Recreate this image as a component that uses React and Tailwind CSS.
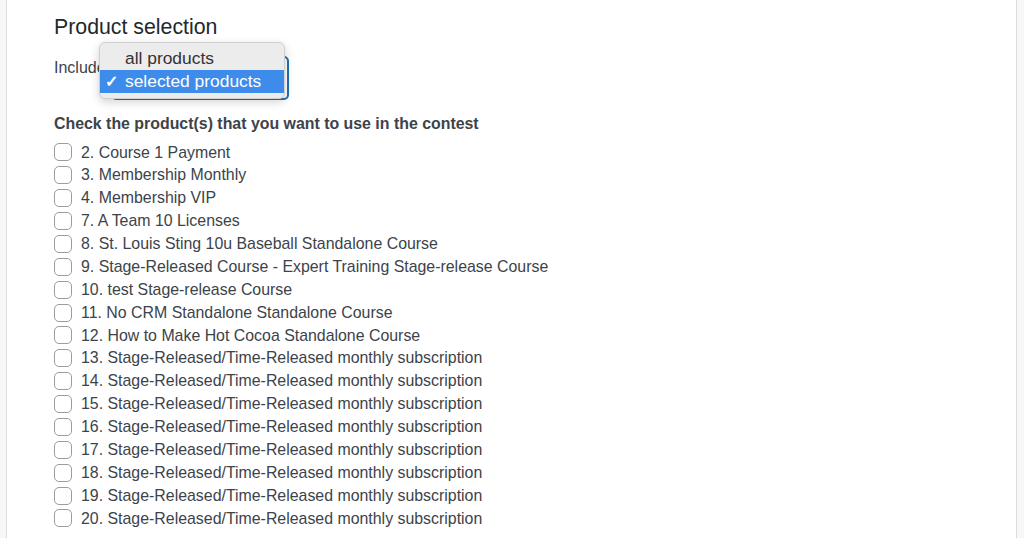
import React from 'react';

const products = [
  '2. Course 1 Payment',
  '3. Membership Monthly',
  '4. Membership VIP',
  '7. A Team 10 Licenses',
  '8. St. Louis Sting 10u Baseball Standalone Course',
  '9. Stage-Released Course - Expert Training Stage-release Course',
  '10. test Stage-release Course',
  '11. No CRM Standalone Standalone Course',
  '12. How to Make Hot Cocoa Standalone Course',
  '13. Stage-Released/Time-Released monthly subscription',
  '14. Stage-Released/Time-Released monthly subscription',
  '15. Stage-Released/Time-Released monthly subscription',
  '16. Stage-Released/Time-Released monthly subscription',
  '17. Stage-Released/Time-Released monthly subscription',
  '18. Stage-Released/Time-Released monthly subscription',
  '19. Stage-Released/Time-Released monthly subscription',
  '20. Stage-Released/Time-Released monthly subscription',
];

function IncludeRow() {
  return (
    <div className="relative flex h-[58px] items-start">
      <span className="mt-[16px] w-[57px] shrink-0 text-[16px] leading-[20px] text-[#3c434a]">Include</span>
      <div className="mt-[14px] h-[44px] w-[178px] rounded-[5px] border-2 border-[#2271b1] bg-white" />

      {/* open native select menu */}
      <div className="absolute left-[45px] top-0 w-[186px] rounded-[6px] border border-[#cfcfcf] bg-[#ececec] pt-[4px] pb-[5px] shadow-[0_3px_10px_rgba(0,0,0,0.18)]">
        <div className="flex h-[23px] items-center pl-[25px] text-[17.4px] text-[#333]">all products</div>
        <div className="flex h-[23px] items-center bg-[#3d8bea] text-[17.4px] text-white">
          <span className="w-[25px] pl-[5px] text-[16px] font-bold">✓</span>
          <span>selected products</span>
        </div>
      </div>
    </div>
  );
}

export default function App() {
  return (
    <div className="h-[538px] w-full overflow-hidden bg-[#f7f7f7] font-['Liberation_Sans',Arial,sans-serif]">
      <div className="ml-[6px] h-full w-[1011px] border-x border-[#dcdcde] bg-white pl-[47px] pt-[12px]">
        <h2 className="text-[21.3px] leading-[30px] text-[#23282d]">Product selection</h2>
        <IncludeRow />
        <p className="mt-[14px] text-[15.9px] font-bold leading-[20px] text-[#3c434a]">
          Check the product(s) that you want to use in the contest
        </p>
        <ul className="mt-[7px]">
          {products.map((name) => (
            <li key={name} className="flex h-[22.875px] items-center">
              <span className="h-[18px] w-[18px] shrink-0 rounded-[5px] border border-[#999ca0] bg-white" />
              <span className="ml-[9px] text-[15.9px] text-[#3c434a]">{name}</span>
            </li>
          ))}
        </ul>
      </div>
    </div>
  );
}
